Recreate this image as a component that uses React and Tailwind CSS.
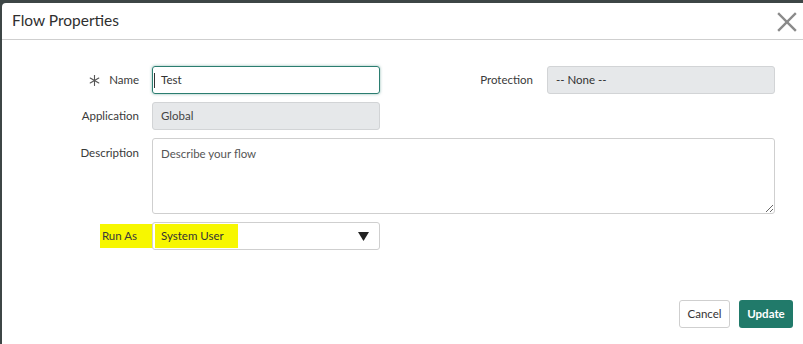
import React from 'react';

function Asterisk() {
  return (
    <svg width="11" height="11" viewBox="0 0 11 11" className="mr-[9px]">
      <g stroke="#555" strokeWidth="1.1" strokeLinecap="round">
        <line x1="5.5" y1="0.5" x2="5.5" y2="10.5" />
        <line x1="1.2" y1="3" x2="9.8" y2="8" />
        <line x1="1.2" y1="8" x2="9.8" y2="3" />
      </g>
    </svg>
  );
}

function Label({ children, className = '' }) {
  return (
    <div className={`w-[137px] shrink-0 flex items-center justify-end text-[11.5px] text-[#3a3a3a] ${className}`}>
      {children}
    </div>
  );
}

export default function App() {
  return (
    <div className="w-[803px] h-[344px] bg-[#3d4646] pt-[3px] pl-[2px] overflow-hidden" style={{ fontFamily: 'Lato, "Liberation Sans", sans-serif' }}>
      <div className="h-full bg-white rounded-tl-[4px] flex flex-col">
        <div className="h-[37px] flex items-center justify-between pl-[10px] pr-[6px] border-b border-[#cfcfcf] shrink-0">
          <span className="text-[15.5px] text-[#2f2f2f]">Flow Properties</span>
          <svg width="20" height="20" viewBox="0 0 20 20" className="mt-[1px]">
            <g stroke="#8a8a8a" strokeWidth="2.4" strokeLinecap="square">
              <line x1="2" y1="2" x2="18" y2="18" />
              <line x1="18" y1="2" x2="2" y2="18" />
            </g>
          </svg>
        </div>

        <div className="flex flex-col gap-[8px] pt-[26px]">
          <div className="flex items-center h-[28px]">
            <Label>
              <Asterisk />
              Name
            </Label>
            <div className="relative z-10 ml-[13px] w-[228px] h-[28px] rounded-[3px] border border-[#2b7d70] shadow-[0_0_3px_rgba(43,125,112,0.55)] flex items-center pl-[1px] text-[11.5px] text-[#333]">
              <span className="w-px h-[15px] bg-[#333] mr-[6px]" />
              Test
            </div>
            <div className="w-[153px] flex justify-end text-[11.5px] text-[#3a3a3a]">Protection</div>
            <div className="ml-[14px] w-[228px] h-[28px] rounded-[3px] border border-[#d2d4d6] bg-[#e6e8ea] flex items-center pl-[8px] text-[11.5px] text-[#333]">
              -- None --
            </div>
          </div>

          <div className="flex items-center h-[28px]">
            <Label>Application</Label>
            <div className="ml-[13px] w-[228px] h-[28px] rounded-[3px] border border-[#d2d4d6] bg-[#e6e8ea] flex items-center pl-[8px] text-[11.5px] text-[#444]">
              Global
            </div>
          </div>

          <div className="flex items-start h-[76px]">
            <Label className="h-[30px]">Description</Label>
            <textarea
              readOnly
              placeholder="Describe your flow"
              className="ml-[13px] w-[623px] h-[76px] rounded-[3px] border border-[#cfcfcf] px-[8px] py-[6px] text-[11.5px] text-[#444] placeholder:text-[#555] outline-none resize"
            />
          </div>

          <div className="flex items-center h-[28px]">
            <Label>
              <span className="bg-[#f7f700] pl-[2px] pr-[16px] py-[3px] -mr-[14px]">Run As</span>
            </Label>
            <div className="relative ml-[13px] w-[228px] h-[28px] rounded-[3px] border border-[#cfcfcf] flex items-center justify-between pl-[2px] pr-[10px] text-[11.5px] text-[#333]">
              <span className="bg-[#f7f700] pl-[6px] pr-[14px] py-[3px]">System User</span>
              <svg width="11" height="9" viewBox="0 0 11 9">
                <path d="M0 0 L11 0 L5.5 9 Z" fill="#222" />
              </svg>
            </div>
          </div>
        </div>

        <div className="flex justify-end gap-[9px] pr-[10px] mt-[50px]">
          <div className="w-[51px] h-[28px] rounded-[3px] border border-[#cfcfcf] flex items-center justify-center text-[11.5px] text-[#333]">
            Cancel
          </div>
          <div className="w-[54px] h-[28px] rounded-[3px] bg-[#217a6a] flex items-center justify-center text-[11.5px] font-bold text-white">
            Update
          </div>
        </div>
      </div>
    </div>
  );
}
